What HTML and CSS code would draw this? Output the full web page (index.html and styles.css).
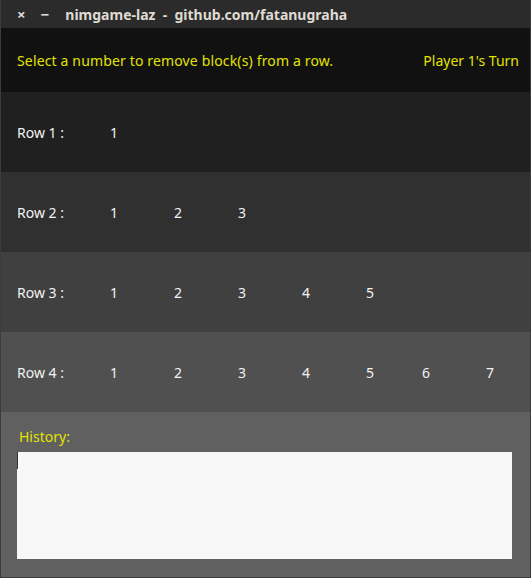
FILE: index.html
```html
<!DOCTYPE html>
<html>
<head>
<meta charset="utf-8">
<link rel="stylesheet" href="styles.css">
</head>
<body>
<div class="window">
  <div class="titlebar">
    <span class="ctl close">×</span>
    <span class="ctl min">−</span>
    <span class="title">nimgame-laz&nbsp; - &nbsp;github.com/fatanugraha</span>
  </div>
  <div class="header">
    <span class="msg">Select a number to remove block(s) from a row.</span>
    <span class="turn">Player 1's Turn</span>
  </div>
  <div class="row r1">
    <span class="label">Row 1 :</span>
    <div class="nums"><span>1</span></div>
  </div>
  <div class="row r2">
    <span class="label">Row 2 :</span>
    <div class="nums"><span>1</span><span>2</span><span>3</span></div>
  </div>
  <div class="row r3">
    <span class="label">Row 3 :</span>
    <div class="nums"><span>1</span><span>2</span><span>3</span><span>4</span><span>5</span></div>
  </div>
  <div class="row r4">
    <span class="label">Row 4 :</span>
    <div class="nums"><span>1</span><span>2</span><span>3</span><span>4</span><span>5</span><span>6</span><span>7</span></div>
  </div>
  <div class="history">
    <div class="hlabel">History:</div>
    <div class="hbox"><span class="caret"></span></div>
  </div>
</div>
</body>
</html>
```
FILE: styles.css
```css
html, body {
  margin: 0;
  padding: 0;
  background: #3a3a3a;
}
body {
  font-family: "Noto Sans", "DejaVu Sans", sans-serif;
  font-size: 14px;
}
.window {
  width: 531px;
  height: 578px;
  box-sizing: border-box;
  border-left: 1px solid #3c3c3c;
  border-right: 1px solid #3c3c3c;
  border-bottom: 1px solid #3c3c3c;
  display: flex;
  flex-direction: column;
  overflow: hidden;
}
.titlebar {
  height: 28px;
  flex: none;
  background: #2b2b2b;
  display: flex;
  align-items: center;
  color: #dfdbd2;
  font-weight: bold;
  font-size: 14px;
}
.ctl {
  color: #dcdcdc;
  font-size: 15px;
}
.close { margin-left: 16px; }
.min { margin-left: 15px; }
.title { margin-left: 16px; white-space: pre; }
.header {
  height: 64px;
  flex: none;
  background: #111111;
  display: flex;
  align-items: center;
  justify-content: space-between;
  padding: 0 11px 0 16px;
  color: #e3e300;
}
.msg { letter-spacing: 0.15px; }
.row {
  height: 80px;
  flex: none;
  display: flex;
  align-items: center;
  padding-left: 16px;
  color: #f2f2f2;
}
.r1 { background: #202020; }
.r2 { background: #303030; }
.r3 { background: #404040; }
.r4 { background: #505050; }
.label { width: 93px; flex: none; }
.nums {
  flex: none;
  display: grid;
  grid-template-columns: 64px 64px 64px 64px 56px 64px 40px;
}
.history {
  flex: 1;
  background: #606060;
  padding: 16px 18px 0 16px;
}
.hlabel {
  color: #e3e300;
  padding-left: 2px;
  height: 24px;
  line-height: 18px;
}
.hbox {
  height: 107px;
  background: #f8f8f8;
  position: relative;
}
.caret {
  position: absolute;
  left: 0;
  top: 0;
  width: 1px;
  height: 17px;
  background: #333;
}
```
